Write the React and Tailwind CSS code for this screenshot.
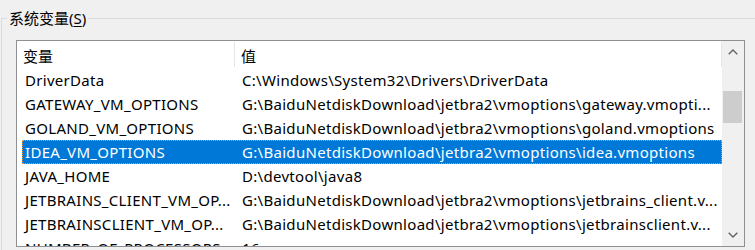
import React from "react";

const rows = [
  ["DriverData", "C:\\Windows\\System32\\Drivers\\DriverData"],
  ["GATEWAY_VM_OPTIONS", "G:\\BaiduNetdiskDownload\\jetbra2\\vmoptions\\gateway.vmopti..."],
  ["GOLAND_VM_OPTIONS", "G:\\BaiduNetdiskDownload\\jetbra2\\vmoptions\\goland.vmoptions"],
  ["IDEA_VM_OPTIONS", "G:\\BaiduNetdiskDownload\\jetbra2\\vmoptions\\idea.vmoptions"],
  ["JAVA_HOME", "D:\\devtool\\java8"],
  ["JETBRAINS_CLIENT_VM_OP...", "G:\\BaiduNetdiskDownload\\jetbra2\\vmoptions\\jetbrains_client.v..."],
  ["JETBRAINSCLIENT_VM_OP...", "G:\\BaiduNetdiskDownload\\jetbra2\\vmoptions\\jetbrainsclient.v..."],
  ["NUMBER_OF_PROCESSORS", "16"],
];

const SELECTED = 3;

function Chevron({ up }) {
  return (
    <svg width="10" height="6" viewBox="0 0 10 6" fill="none">
      <path
        d={up ? "M0.7 5.3 L5 1 L9.3 5.3" : "M0.7 0.7 L5 5 L9.3 0.7"}
        stroke="#606060"
        strokeWidth="1.3"
      />
    </svg>
  );
}

export default function App() {
  return (
    <div
      className="h-[250px] w-[755px] overflow-hidden bg-[#f0f0f0] text-[15px] text-black"
      style={{ fontFamily: '"Noto Sans", "Noto Sans CJK SC", sans-serif' }}
    >
      <fieldset className="mt-[8px] ml-[1px] border border-r-0 border-b-0 border-[#dcdcdc] pb-4">
        <legend className="ml-[5px] px-[2px] leading-[20px]">
          系统变量(<span className="underline underline-offset-2">S</span>)
        </legend>

        {/* List view */}
        <div className="mt-[12px] ml-[14px] flex h-[207px] w-[729px] border border-[#8f8f94] bg-white">
          <div className="flex-1 min-w-0 overflow-hidden">
            {/* Header */}
            <div className="flex h-[27px]">
              <div className="w-[217px] pl-[6px] pt-[4px] leading-[23px]">变量</div>
              <div className="my-[1px] w-px bg-[#e5e5e5]" />
              <div className="flex-1 pl-[6px] pt-[4px] leading-[23px]">值</div>
              <div className="my-[1px] w-px bg-[#e5e5e5]" />
            </div>

            {/* Rows */}
            {rows.map(([name, value], i) => (
              <div
                key={name}
                className={`ml-[5px] flex h-[24px] w-[700px] leading-[24px] tracking-[0.3px] whitespace-nowrap ${
                  i === SELECTED
                    ? "bg-[#0078d7] text-white outline-1 outline-dotted -outline-offset-1 outline-[#f5963c]"
                    : ""
                }`}
              >
                <div className="w-[212px] shrink-0 overflow-hidden pl-[3px]">{name}</div>
                <div className="flex-1 overflow-hidden pl-[8px]">{value}</div>
              </div>
            ))}
          </div>

          {/* Scrollbar */}
          <div className="flex w-[22px] flex-col bg-[#f0f0f0]">
            <div className="flex h-[22px] items-center justify-center">
              <Chevron up />
            </div>
            <div className="mt-[28px] ml-[1px] h-[32px] w-[19px] bg-[#cdcdcd]" />
            <div className="flex-1" />
            <div className="flex h-[22px] items-center justify-center">
              <Chevron />
            </div>
          </div>
        </div>
      </fieldset>
    </div>
  );
}
